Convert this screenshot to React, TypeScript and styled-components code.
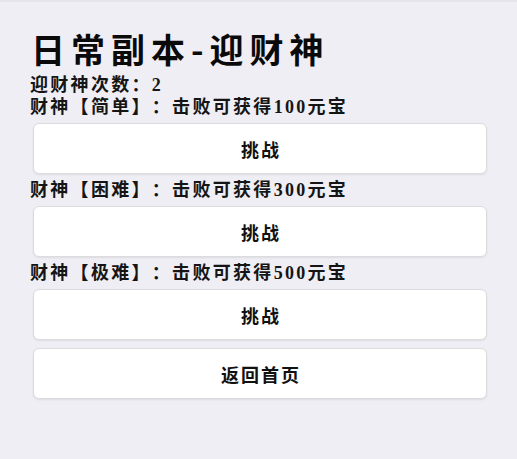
import React from 'react';
import styled, { createGlobalStyle } from 'styled-components';

const GlobalStyle = createGlobalStyle`
  html, body {
    margin: 0;
    padding: 0;
    background: #efeef4;
  }
  body {
    font-family: "Liberation Serif", "Noto Sans CJK SC", serif;
    color: #111;
    text-spacing-trim: space-all;
  }
`;

// 每档财神的难度与奖励
const bosses = [
  { level: '简单', reward: 100 },
  { level: '困难', reward: 300 },
  { level: '极难', reward: 500 },
];

const App: React.FC = () => {
  const remaining = 2;

  return (
    <>
      <GlobalStyle />
      <Page>
        <Title>日常副本-迎财神</Title>
        <InfoLine>迎财神次数：{remaining}</InfoLine>
        {bosses.map((b) => (
          <Stage key={b.level}>
            <InfoLine>
              财神【{b.level}】：击败可获得{b.reward}元宝
            </InfoLine>
            <ActionButton type="button">挑战</ActionButton>
          </Stage>
        ))}
        <ActionButton type="button" $spaced>
          返回首页
        </ActionButton>
      </Page>
    </>
  );
};

/* ---------- 样式 ---------- */

const Page = styled.div`
  min-height: 459px;
  box-sizing: border-box;
  border-top: 2px solid #e4e4ea;
  padding: 27px 30px 40px 30px;
  display: flex;
  flex-direction: column;
`;

const Title = styled.h1`
  margin: 0 0 5px 1px;
  font-family: "Noto Sans CJK SC", "Liberation Sans", sans-serif;
  font-size: 34px;
  font-weight: 700;
  line-height: 40px;
  letter-spacing: 6px;
  color: #0a0a0a;
`;

const InfoLine = styled.div`
  font-size: 18px;
  font-weight: 700;
  line-height: 22px;
  letter-spacing: 2.3px;
  color: #151515;
  white-space: nowrap;
  text-spacing-trim: space-all;
`;

const Stage = styled.div`
  display: flex;
  flex-direction: column;
`;

const ActionButton = styled.button<{ $spaced?: boolean }>`
  margin: ${(p) => (p.$spaced ? '3px' : '5px')} 0 5px 3px;
  width: 454px;
  height: 51px;
  background: #ffffff;
  border: 1px solid #dcdcdf;
  border-radius: 6px;
  box-shadow: 0 1px 2px rgba(0, 0, 0, 0.08);
  font-family: "Noto Sans CJK SC", "Liberation Sans", sans-serif;
  font-size: 18px;
  font-weight: 700;
  letter-spacing: 2px;
  text-indent: 2px;
  color: #111;
  cursor: pointer;
  padding: 0;
`;

export default App;
